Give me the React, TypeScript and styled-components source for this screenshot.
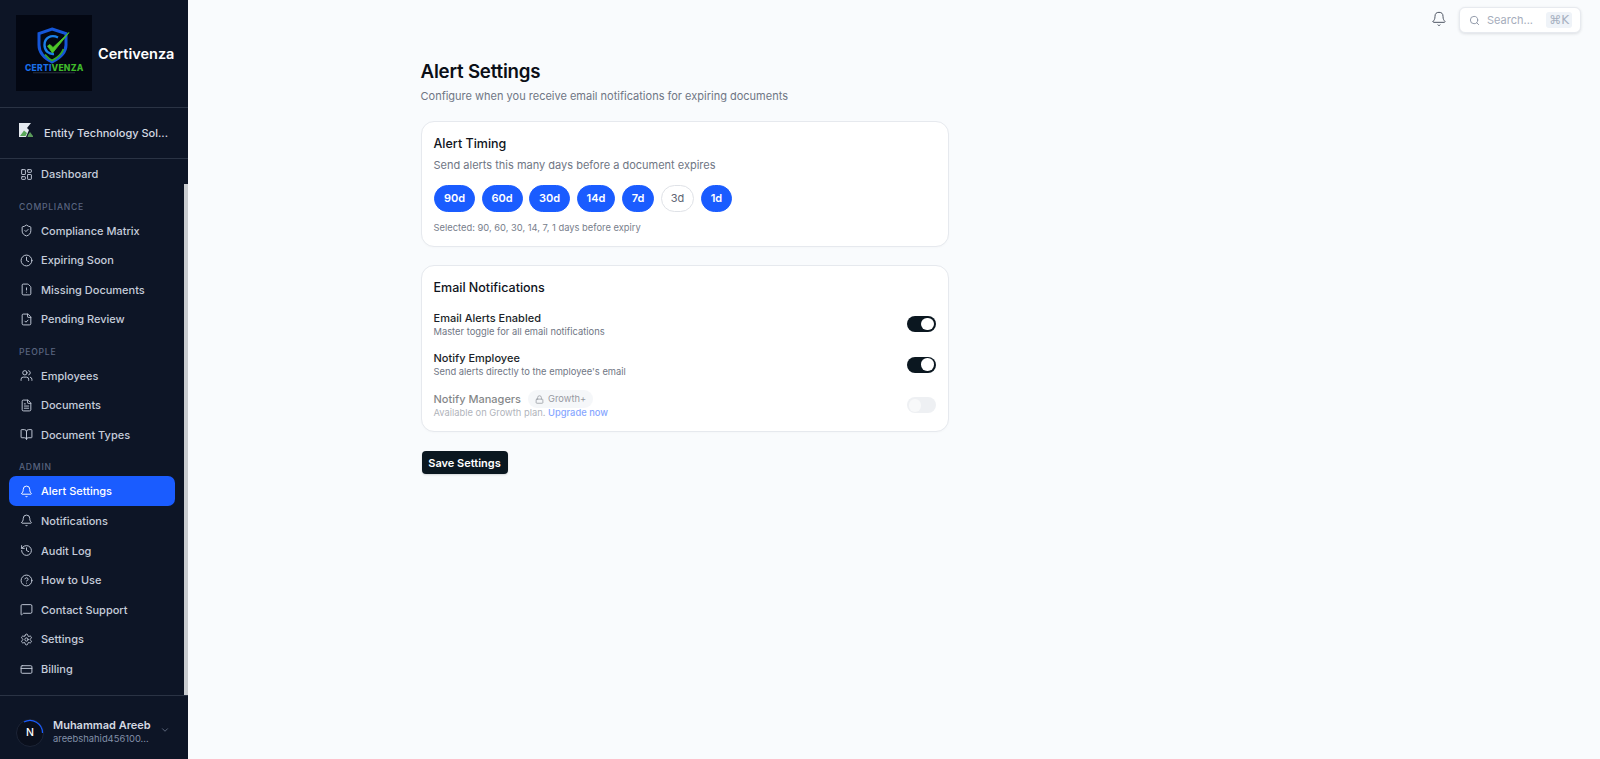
import React from "react";
import styled, { createGlobalStyle } from "styled-components";
import {
  LayoutDashboard, ShieldCheck, Clock, FileWarning, FileCheck, Users, FileText, BookOpen, Bell,
  History, CircleHelp, MessageSquare, Settings, CreditCard, ChevronDown, Lock, Search,
} from "lucide-react";

const Global = createGlobalStyle`
  html, body { margin: 0; padding: 0; height: 100%; overflow: hidden; }
  body { font-family: Inter, "Liberation Sans", sans-serif; background: #f9fbfd; -webkit-font-smoothing: antialiased; }
  #root { height: 100%; }
  * { box-sizing: border-box; }
`;

const Shell = styled.div`display: flex; height: 759px; width: 1600px;`;
const Side = styled.aside`
  width: 188px; flex: none; background: #0d1526; display: flex; flex-direction: column;
`;
const Brand = styled.div`
  height: 108px; display: flex; align-items: center; gap: 6px; padding: 0 16px;
  border-bottom: 1px solid #2a3344;
`;
const LogoBox = styled.svg`width: 76px; height: 76px; flex: none; display: block; margin-top: -1px;`;
const BrandName = styled.span`color: #fff; font-size: 14.5px; font-weight: 600; white-space: nowrap; margin-top: -1px;`;
const OrgRow = styled.div`
  height: 51px; display: flex; align-items: center; gap: 11px; padding: 0 19px;
  border-bottom: 1px solid #2a3344;
`;
const OrgName = styled.span`color: #d4d9e2; font-size: 11px; font-weight: 500; white-space: nowrap;`;
const NavWrap = styled.div`flex: 1; position: relative; min-height: 0;`;
const Nav = styled.nav`padding: 0.5px 13px 0 9px; display: flex; flex-direction: column;`;
const Thumb = styled.div`
  position: absolute; right: 0; top: 25px; bottom: 0; width: 4px; background: #c9ccd0;
`;
const Group = styled.div`
  height: 26.6px; padding: 11.5px 10px 0; font-size: 8.6px; line-height: 13px; letter-spacing: 0.75px; font-weight: 500;
  color: #5a6580; text-transform: uppercase;
`;
const Item = styled.div<{ $active?: boolean }>`
  height: 29.65px; display: flex; align-items: center; gap: 8px; padding: 0 11px; border-radius: 7px;
  font-size: 11px; font-weight: 500; white-space: nowrap;
  color: ${(p) => (p.$active ? "#fff" : "#c5ccda")};
  background: ${(p) => (p.$active ? "#1a5cff" : "transparent")};
  svg { flex: none; }
`;
const Foot = styled.div`
  height: 64px; border-top: 1px solid #2a3344; display: flex; align-items: center; padding: 10px 16px 0; gap: 9px;
`;
const Avatar = styled.div`
  width: 28px; height: 28px; border-radius: 50%; flex: none; position: relative; background: #0a0f1c;
  border: 1px solid #1c2436; color: #fff; font-size: 10.5px; font-weight: 500;
  display: flex; align-items: center; justify-content: center;
`;
const Arc = styled.svg`position: absolute; inset: -1px; width: 28px; height: 28px;`;
const Who = styled.div`flex: 1; min-width: 0; line-height: 14px; margin-top: -2px;`;
const WhoName = styled.div`color: #d4d9e2; font-size: 11px; font-weight: 600; white-space: nowrap;`;
const WhoMail = styled.div`color: #8290a8; font-size: 9.4px; white-space: nowrap;`;
const Chev = styled.span`color: #6b768c; display: flex; margin-right: 2px; margin-top: -6px;`;

const Main = styled.main`flex: 1; display: flex; flex-direction: column; min-width: 0;`;
const Top = styled.header`
  height: 40px; flex: none; display: flex; align-items: flex-start; justify-content: flex-end; gap: 12px;
  padding: 7px 19px 0 0; color: #4e5563;
`;
const BellBtn = styled.span`display: flex; margin-top: 4px;`;
const SearchBox = styled.div`
  width: 122px; height: 26px; background: #fff; border: 1px solid #e7eaef; border-radius: 6px;
  box-shadow: 0 1px 3px rgba(15, 23, 42, 0.12); display: flex; align-items: center; padding: 0 8px 0 9px; gap: 7px;
  color: #8a93a3;
`;
const SearchText = styled.span`flex: 1; color: #a6adbc; font-size: 11px;`;
const Kbd = styled.span`
  background: #eff3f8; color: #a6b0c0; font-size: 12px; padding: 0 3px; height: 16px; line-height: 16px; border-radius: 3px;
  font-family: "DejaVu Sans", Inter, sans-serif;
`;
const Content = styled.div`padding: 21px 0 0 232.5px; width: 760px;`;
const H1 = styled.h1`margin: 0; font-size: 18.7px; line-height: 22px; font-weight: 600; color: #0b0f17; letter-spacing: -0.2px;`;
const Sub = styled.p`margin: 4.7px 0 0; font-size: 11px; line-height: 16px; color: #6f7684;`;
const Card = styled.section`
  background: #fff; border: 1px solid #e6e9ee; border-radius: 13px; padding: 12px 12px 12px;
  width: 528px; box-shadow: 0 1px 2px rgba(15, 23, 42, 0.02);
`;
const FirstCard = styled(Card)`margin-top: 17.6px; height: 126px;`;
const SecondCard = styled(Card)`margin-top: 17.4px; height: 167.6px;`;
const CardTitle = styled.h2`margin: 0; font-size: 12.5px; line-height: 19px; font-weight: 500; color: #10141c;`;
const CardDesc = styled.p`margin: 3.6px 0 0; font-size: 11px; line-height: 16px; color: #6f7684;`;
const Pills = styled.div`display: flex; gap: 6.5px; margin-top: 12px; padding-left: 0.5px;`;
const Pill = styled.span<{ $on: boolean }>`
  height: 26.7px; min-width: 28px; padding: 0 8.95px; border-radius: 15px; display: flex; align-items: center; justify-content: center;
  font-size: 11px; font-weight: ${(p) => (p.$on ? 600 : 400)};
  background: ${(p) => (p.$on ? "#1a5cff" : "#fff")};
  color: ${(p) => (p.$on ? "#fff" : "#5e6573")};
  border: 1px solid ${(p) => (p.$on ? "#1a5cff" : "#dfe2e7")};
`;
const Selected = styled.p`margin: 9px 0 0; font-size: 9.35px; line-height: 14px; color: #777e8b;`;
const Rows = styled.div`display: flex; flex-direction: column; gap: 12.7px; margin-top: 14px;`;
const Row = styled.div`display: flex; align-items: center; justify-content: space-between; height: 28px;`;
const RowText = styled.div<{ $off?: boolean }>`opacity: ${(p) => (p.$off ? 0.55 : 1)}; line-height: 14px;`;
const RowHead = styled.div`display: flex; align-items: center; gap: 7px; height: 14px; font-size: 11px; font-weight: 500; color: #1b1f28;`;
const RowSub = styled.div`font-size: 9.35px; color: #6f7684;`;
const UpgradeLink = styled.span`color: #1a5cff; font-weight: 500;`;
const Badge = styled.span`
  display: inline-flex; align-items: center; gap: 4px; height: 17.4px; padding: 0 7px; border-radius: 9px;
  background: #eef1f5; font-size: 9.35px; color: #3e4552; font-weight: 400;
`;
const Toggle = styled.span<{ $on: boolean }>`
  width: 29px; height: 16px; border-radius: 8px; flex: none; display: flex; align-items: center; margin-top: -1.4px;
  justify-content: ${(p) => (p.$on ? "flex-end" : "flex-start")}; padding: 0 2px;
  background: ${(p) => (p.$on ? "#0b1720" : "#eef0f3")};
  &::after { content: ""; width: 12.5px; height: 12.5px; border-radius: 50%; background: ${(p) => (p.$on ? "#fff" : "#f8f9fa")}; }
`;
const Save = styled.button`
  display: block; margin: 18.7px 0 0 1px; width: 86px; height: 23.4px; background: #0b1720; color: #fff; border: 0; border-radius: 4px;
  font-family: inherit; font-size: 11px; font-weight: 600; padding: 0; box-shadow: 0 1px 2px rgba(0,0,0,.15);
`;

const I = 13;
const groups: { label?: string; items: [string, React.ComponentType<any>, boolean?][] }[] = [
  { items: [["Dashboard", LayoutDashboard]] },
  { label: "Compliance", items: [["Compliance Matrix", ShieldCheck], ["Expiring Soon", Clock], ["Missing Documents", FileWarning], ["Pending Review", FileCheck]] },
  { label: "People", items: [["Employees", Users], ["Documents", FileText], ["Document Types", BookOpen]] },
  { label: "Admin", items: [["Alert Settings", Bell, true], ["Notifications", Bell], ["Audit Log", History], ["How to Use", CircleHelp], ["Contact Support", MessageSquare], ["Settings", Settings], ["Billing", CreditCard]] },
];
const days: [string, boolean][] = [["90d", true], ["60d", true], ["30d", true], ["14d", true], ["7d", true], ["3d", false], ["1d", true]];

function Logo() {
  return (
    <LogoBox viewBox="0 0 76 76">
      <rect width="76" height="76" fill="#030712" />
      <path d="M36 14 L50 18.5 V30 C50 38 44 43 36 47 C28 43 23 38 23 30 V18.5 Z" fill="none" stroke="#1556d8" strokeWidth="3" />
      <path d="M42 22.5 C35 19 28.5 23 28.5 30 C28.5 36 33 39.5 38 39" fill="none" stroke="#1a7fe8" strokeWidth="2.4" />
      <path d="M31.5 31 L36.5 38 L53 17.5 L37 32.5 L34 29.5 Z" fill="#4fc72a" stroke="#4fc72a" strokeWidth="0.8" strokeLinejoin="round" />
      <path d="M29 39.5 C32 43 34 44.5 36 45.5 C40 43.5 45 40.5 47.5 34" fill="none" stroke="#37a826" strokeWidth="1.8" />
      <text x="9" y="55.5" fontFamily="Inter, sans-serif" fontSize="8.6" fontWeight="800" letterSpacing="0.2">
        <tspan fill="#1a6fe8">CERTI</tspan><tspan fill="#3fb82a">VENZA</tspan>
      </text>
      <rect x="17" y="57.5" width="42" height="0.7" fill="#3a4250" />
    </LogoBox>
  );
}

function Broken() {
  return (
    <svg width="14" height="14" viewBox="0 0 14 14" style={{ flex: "none", marginTop: -6 }}>
      <path d="M0 0 H12 L8 5 L10 7 L7 14 H0 Z" fill="#e4e9ef" />
      <path d="M1 13 L5 7.5 L8 10 L6.5 13 Z" fill="#5aa85a" />
      <path d="M9 12 L11 9 L14 13 V14 H8.5 Z" fill="#5a9a5a" />
    </svg>
  );
}

export default function App() {
  return (
    <Shell>
      <Global />
      <Side>
        <Brand>
          <Logo />
          <BrandName>Certivenza</BrandName>
        </Brand>
        <OrgRow>
          <Broken />
          <OrgName>Entity Technology Sol...</OrgName>
        </OrgRow>
        <NavWrap>
          <Nav>
            {groups.map((g, i) => (
              <React.Fragment key={i}>
                {g.label && <Group>{g.label}</Group>}
                {g.items.map(([name, Ico, active]) => (
                  <Item key={name} $active={active}>
                    <Ico size={I} strokeWidth={1.75} />
                    {name}
                  </Item>
                ))}
              </React.Fragment>
            ))}
          </Nav>
          <Thumb />
        </NavWrap>
        <Foot>
          <Avatar>
            N
            <Arc viewBox="0 0 28 28">
              <path d="M8 3 A12.5 12.5 0 0 1 26.5 14" fill="none" stroke="#1a5cff" strokeWidth="1.2" />
            </Arc>
          </Avatar>
          <Who>
            <WhoName>Muhammad Areeb</WhoName>
            <WhoMail>areebshahid456100...</WhoMail>
          </Who>
          <Chev><ChevronDown size={10} /></Chev>
        </Foot>
      </Side>
      <Main>
        <Top>
          <BellBtn><Bell size={16} strokeWidth={1.5} /></BellBtn>
          <SearchBox>
            <Search size={11} />
            <SearchText>Search...</SearchText>
            <Kbd>⌘K</Kbd>
          </SearchBox>
        </Top>
        <Content>
          <H1>Alert Settings</H1>
          <Sub>Configure when you receive email notifications for expiring documents</Sub>
          <FirstCard>
            <CardTitle>Alert Timing</CardTitle>
            <CardDesc>Send alerts this many days before a document expires</CardDesc>
            <Pills>
              {days.map(([d, on]) => <Pill key={d} $on={on}>{d}</Pill>)}
            </Pills>
            <Selected>Selected: 90, 60, 30, 14, 7, 1 days before expiry</Selected>
          </FirstCard>
          <SecondCard>
            <CardTitle>Email Notifications</CardTitle>
            <Rows>
              <Row>
                <RowText>
                  <RowHead>Email Alerts Enabled</RowHead>
                  <RowSub>Master toggle for all email notifications</RowSub>
                </RowText>
                <Toggle $on />
              </Row>
              <Row>
                <RowText>
                  <RowHead>Notify Employee</RowHead>
                  <RowSub>Send alerts directly to the employee's email</RowSub>
                </RowText>
                <Toggle $on />
              </Row>
              <Row>
                <RowText $off>
                  <RowHead>Notify Managers <Badge><Lock size={9} />Growth+</Badge></RowHead>
                  <RowSub>Available on Growth plan. <UpgradeLink>Upgrade now</UpgradeLink></RowSub>
                </RowText>
                <Toggle $on={false} />
              </Row>
            </Rows>
          </SecondCard>
          <Save>Save Settings</Save>
        </Content>
      </Main>
    </Shell>
  );
}
